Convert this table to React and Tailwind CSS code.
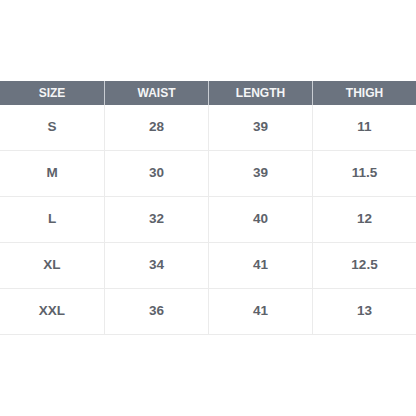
const headers = ["SIZE", "WAIST", "LENGTH", "THIGH"];
const rows = [
  ["S", "28", "39", "11"],
  ["M", "30", "39", "11.5"],
  ["L", "32", "40", "12"],
  ["XL", "34", "41", "12.5"],
  ["XXL", "36", "41", "13"],
];

export default function App() {
  return (
    <div
      className="w-[416px] h-[416px] bg-white pt-[81px]"
      style={{ fontFamily: '"Liberation Sans", Arial, sans-serif' }}
    >
      <div className="grid grid-cols-4 bg-[#6b737f] h-[24px]">
        {headers.map((h, i) => (
          <div
            key={h}
            className={`flex items-center justify-center text-[#f4f5f6] text-[12px] font-bold ${
              i > 0 ? "border-l border-[#c9cdd3]" : ""
            }`}
          >
            {h}
          </div>
        ))}
      </div>
      {rows.map((r, ri) => (
        <div key={ri} className="grid grid-cols-4 h-[46px] border-b border-[#ebebeb]">
          {r.map((c, ci) => (
            <div
              key={ci}
              className={`flex items-center justify-center text-[#5d626a] text-[13.5px] font-bold ${
                ci > 0 ? "border-l border-[#ebebeb]" : ""
              }`}
            >
              {c}
            </div>
          ))}
        </div>
      ))}
    </div>
  );
}
